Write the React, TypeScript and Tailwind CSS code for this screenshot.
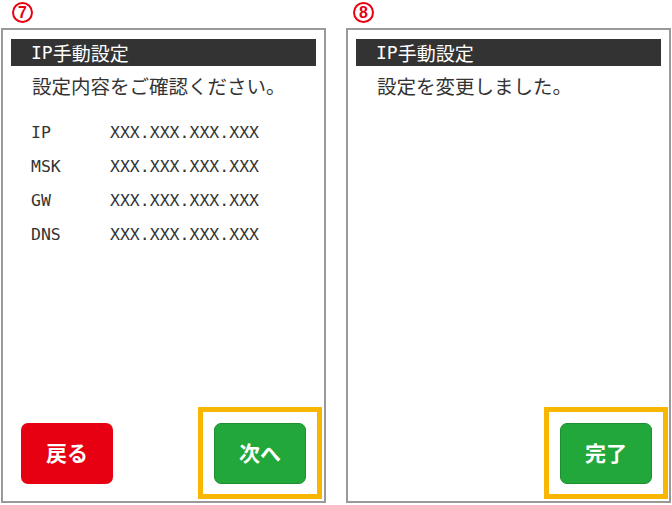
import React from "react";

const jp = { fontFamily: '"Noto Sans CJK JP", "Noto Sans", sans-serif' };
const mono = { fontFamily: '"DejaVu Sans Mono", "Noto Sans CJK JP", monospace' };
const sans = { fontFamily: '"Liberation Sans", Arial, sans-serif' };

function Header() {
  return (
    <div className="mx-2 mt-[9px] h-[27px] bg-[#333333] flex items-center pl-[20px] text-white text-[19px] leading-none">
      <span style={mono} className="text-[18px]">IP</span>
      <span style={jp}>手動設定</span>
    </div>
  );
}

function Frame({ children }: { children: React.ReactNode }) {
  return (
    <div className="w-[124px] h-[92px] border-[5px] border-[#f8b600] flex items-center justify-center">
      {children}
    </div>
  );
}

function Btn({ label, color }: { label: string; color: string }) {
  return (
    <div
      style={jp}
      className={`w-[92px] h-[61px] rounded-[7px] flex items-center justify-center text-white text-[21px] font-bold ${color}`}
    >
      {label}
    </div>
  );
}

function Circled({ n }: { n: string }) {
  return (
    <div
      style={sans}
      className="w-[21px] h-[21px] rounded-full border-[2.5px] border-[#e60012] flex items-center justify-center text-[#e60012] text-[16px] font-bold leading-none"
    >
      {n}
    </div>
  );
}

const rows = ["IP", "MSK", "GW", "DNS"];

export default function App() {
  return (
    <div className="w-[672px] h-[505px] bg-white flex flex-col">
      <div className="h-[28px] flex items-start pt-[2px]">
        <div className="ml-[12px] w-[341px]">
          <Circled n="7" />
        </div>
        <Circled n="8" />
      </div>
      <div className="flex pl-[1px] gap-[20px]">
        <div className="w-[325px] h-[475px] border-2 border-[#999999] flex flex-col">
          <Header />
          <div style={jp} className="pl-[29px] mt-[9px] text-[19.5px] leading-[22px] text-[#333]">
            設定内容をご確認ください。
          </div>
          <div className="mt-[25px] flex flex-col gap-[13px] pl-[28px]">
            {rows.map((r) => (
              <div key={r} style={mono} className="flex text-[16.5px] leading-[21px] text-[#333]">
                <span className="w-[79px]">{r}</span>
                <span>XXX.XXX.XXX.XXX</span>
              </div>
            ))}
          </div>
          <div className="flex-1" />
          <div className="flex items-center justify-between pl-[18px] pr-[2px] pb-[2px]">
            <Btn label="戻る" color="bg-[#e60012]" />
            <Frame>
              <Btn label="次へ" color="bg-[#22a83a] border border-[#1d8f31]" />
            </Frame>
          </div>
        </div>
        <div className="w-[325px] h-[475px] border-2 border-[#999999] flex flex-col">
          <Header />
          <div style={jp} className="pl-[29px] mt-[9px] text-[19.5px] leading-[22px] text-[#333]">
            設定を変更しました。
          </div>
          <div className="flex-1" />
          <div className="flex items-center justify-end pr-[1px] pb-[2px]">
            <Frame>
              <Btn label="完了" color="bg-[#22a83a] border border-[#1d8f31]" />
            </Frame>
          </div>
        </div>
      </div>
    </div>
  );
}
